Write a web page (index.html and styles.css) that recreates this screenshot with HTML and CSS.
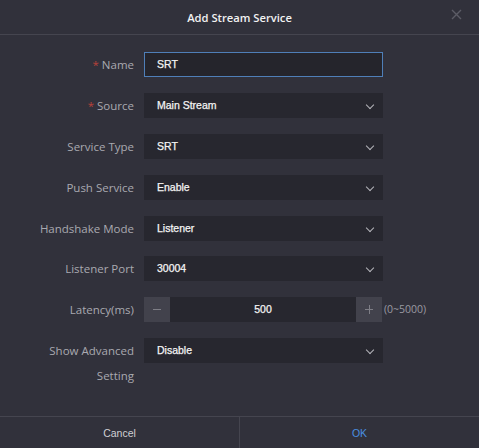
FILE: index.html
```html
<!DOCTYPE html>
<html>
<head>
<meta charset="utf-8">
<link rel="stylesheet" href="styles.css">
</head>
<body>
<div class="dialog">
  <div class="header">
    <span class="title">Add Stream Service</span>
    <span class="close">
      <svg width="11" height="11" viewBox="0 0 11 11"><path d="M1 1L10 10M10 1L1 10" stroke="#5c5c66" stroke-width="1.4" fill="none"/></svg>
    </span>
  </div>
  <div class="body">
    <div class="row">
      <div class="label"><span class="req">*</span>Name</div>
      <div class="field input focused">SRT</div>
    </div>
    <div class="row">
      <div class="label"><span class="req">*</span>Source</div>
      <div class="field select">Main Stream<span class="chev"></span></div>
    </div>
    <div class="row">
      <div class="label">Service Type</div>
      <div class="field select">SRT<span class="chev"></span></div>
    </div>
    <div class="row">
      <div class="label">Push Service</div>
      <div class="field select">Enable<span class="chev"></span></div>
    </div>
    <div class="row">
      <div class="label">Handshake Mode</div>
      <div class="field select">Listener<span class="chev"></span></div>
    </div>
    <div class="row">
      <div class="label">Listener Port</div>
      <div class="field select">30004<span class="chev"></span></div>
    </div>
    <div class="row">
      <div class="label">Latency(ms)</div>
      <div class="stepper">
        <span class="step minus"></span>
        <span class="num">500</span>
        <span class="step plus"></span>
      </div>
      <span class="range">(0~5000)</span>
    </div>
    <div class="row">
      <div class="label">Show Advanced Setting</div>
      <div class="field select">Disable<span class="chev"></span></div>
    </div>
  </div>
  <div class="footer">
    <div class="btn cancel">Cancel</div>
    <div class="btn ok">OK</div>
  </div>
</div>
</body>
</html>
```

FILE: styles.css
```css
html, body {
  margin: 0;
  padding: 0;
  background: #31313b;
}
.dialog {
  width: 479px;
  height: 448px;
  background: #31313b;
  display: flex;
  flex-direction: column;
  font-family: "Liberation Sans", Arial, sans-serif;
}
.header {
  height: 35px;
  border-bottom: 1px solid #45454f;
  box-sizing: border-box;
  display: flex;
  align-items: center;
  justify-content: center;
  position: relative;
}
.title {
  font-family: "Open Sans", sans-serif;
  font-size: 11.2px;
  font-weight: 600;
  color: #f2f2f2;
}
.close {
  position: absolute;
  right: 17px;
  top: 9px;
  display: flex;
}
.body {
  flex: 1;
  padding-top: 17px;
  display: flex;
  flex-direction: column;
  gap: 15.9px;
}
.row {
  display: flex;
  align-items: flex-start;
  height: 25px;
}
.label {
  width: 110px;
  margin-left: 24px;
  margin-right: 10px;
  text-align: right;
  font-family: "Open Sans", sans-serif;
  font-size: 11.5px;
  line-height: 25px;
  color: #a9a9b0;
  flex-shrink: 0;
}
.req {
  color: #b8413a;
  margin-right: 3px;
}
.field {
  width: 239px;
  height: 25px;
  box-sizing: border-box;
  background: #27272f;
  color: #f4f4f4;
  font-size: 10.5px;
  -webkit-text-stroke: 0.25px #f4f4f4;
  line-height: 25px;
  padding-left: 13px;
  position: relative;
}
.input.focused {
  border: 1px solid #4f7fb8;
  background: #25252c;
  padding-left: 12px;
  line-height: 23px;
}
.chev {
  position: absolute;
  right: 10px;
  top: 9px;
  width: 5px;
  height: 5px;
  border-right: 1.3px solid #b4b4ba;
  border-bottom: 1.3px solid #b4b4ba;
  transform: rotate(45deg);
}
.stepper {
  width: 238px;
  height: 25px;
  display: flex;
  background: #27272f;
}
.step {
  width: 26px;
  height: 25px;
  background: #42424c;
  position: relative;
  flex-shrink: 0;
}
.minus::before, .plus::before, .plus::after {
  content: "";
  position: absolute;
  background: #7e7e86;
}
.minus::before, .plus::before {
  left: 9px;
  top: 12px;
  width: 8px;
  height: 1px;
}
.plus::after {
  left: 13px;
  top: 8px;
  width: 1px;
  height: 9px;
}
.num {
  flex: 1;
  text-align: center;
  color: #f4f4f4;
  font-size: 10.5px;
  -webkit-text-stroke: 0.25px #f4f4f4;
  line-height: 25px;
}
.range {
  margin-left: 2px;
  font-family: "Open Sans", sans-serif;
  font-size: 10.5px;
  color: #9a9aa2;
  line-height: 25px;
}
.footer {
  height: 32px;
  border-top: 1px solid #45454f;
  box-sizing: border-box;
  display: flex;
}
.btn {
  flex: 1;
  display: flex;
  align-items: center;
  justify-content: center;
  font-size: 10.5px;
}
.cancel {
  color: #cfcfd4;
  border-right: 1px solid #45454f;
}
.ok {
  color: #4a8fe0;
}
```
